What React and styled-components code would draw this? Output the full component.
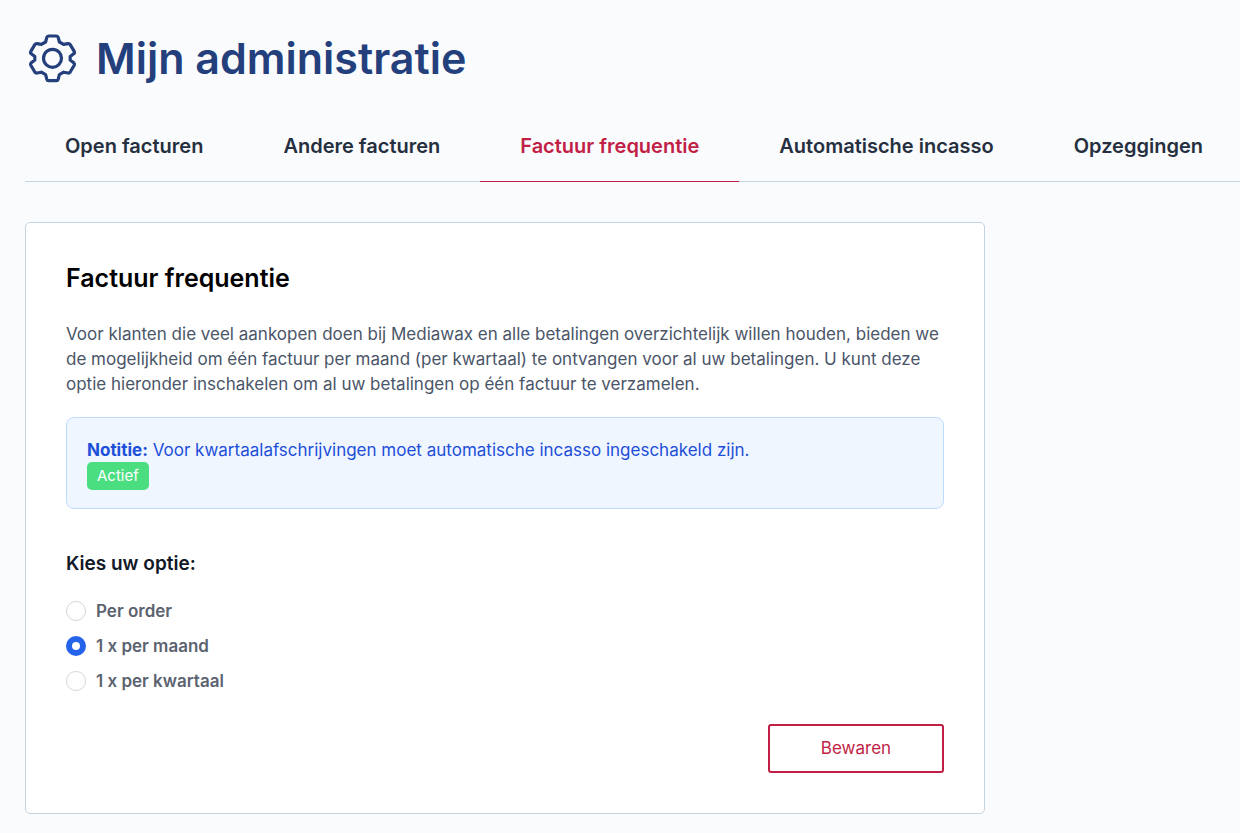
import React, { useState } from 'react'
import styled, { createGlobalStyle } from 'styled-components'

const GlobalStyle = createGlobalStyle`
*{
  box-sizing:border-box;
}
body{
  margin:0;
  background-color:#fafbfd;
  color:#4a5568;
  font-family:Inter, Roboto, sans-serif;
  font-size:17px;
  line-height:25px;
  overflow-x:hidden;
}
`

const Container = styled.main`
  padding:25px 0 20px 25px;
`

const Header = styled.header`
  display:flex;
  align-items:center;
  gap:16px;
  height:66px;
  color:#24407c;
`

const GearIcon = styled.svg`
  width:55px;
  height:54px;
  flex:none;
`

const Title = styled.h1`
  margin:0;
  font-size:43px;
  line-height:66px;
  font-weight:600;
`

const Tabs = styled.nav`
  display:flex;
  margin-top:20px;
  border-bottom:1px solid #c5d4e2;
`

const Tab = styled.a`
  padding:20px 40px;
  margin-bottom:-1px;
  border-bottom:1px solid ${(props) => (props.$active ? "#c11f46" : "transparent")};
  color:${(props) => (props.$active ? "#c11f46" : "#252f3f")};
  font-size:20px;
  line-height:30px;
  font-weight:600;
  text-decoration:none;
  white-space:nowrap;
`

const Card = styled.form`
  max-width:960px;
  margin-top:40px;
  padding:40px;
  background-color:#fff;
  border:1px solid #c5d4e2;
  border-radius:5px;
`

const CardTitle = styled.h2`
  margin:0;
  color:#000;
  font-size:25px;
  line-height:30px;
  font-weight:600;
`

const Descr = styled.p`
  margin:29px 0 20px;
`

const Notice = styled.div`
  padding:20px 20px 18px;
  background-color:#eff6ff;
  border:1px solid #bfdbfe;
  border-radius:8px;
  color:#1d4ed8;
`

const NoticeText = styled.p`
  margin:0;
  line-height:24px;
`

const Badge = styled.span`
  display:block;
  width:fit-content;
  padding:4px 10px;
  background-color:#4ade80;
  border-radius:5px;
  color:#fff;
  font-size:15px;
  line-height:20px;
`

const Options = styled.fieldset`
  display:flex;
  flex-direction:column;
  gap:11px;
  margin:40px 0 0;
  padding:0;
  border:0;
`

const OptionsTitle = styled.legend`
  padding:0;
  margin-bottom:20px;
  color:#111827;
  font-size:19px;
  line-height:30px;
  font-weight:600;
`

const Option = styled.label`
  display:flex;
  align-items:center;
  gap:10px;
  color:#5c6370;
  line-height:24px;
  font-weight:600;
`

const Radio = styled.input`
  appearance:none;
  width:20px;
  height:20px;
  margin:0;
  background-color:#fff;
  border:1px solid #d2d6dc;
  border-radius:50%;
  &:checked{
    background-color:#fff;
    border:6px solid #2563eb;
  }
`

const Actions = styled.div`
  display:flex;
  justify-content:flex-end;
  margin-top:31px;
`

const Button = styled.button`
  width:176px;
  padding:10px 20px;
  background-color:#fff;
  border:2px solid #c11f46;
  border-radius:3px;
  color:#c11f46;
  font-family:inherit;
  font-size:17px;
  line-height:25px;
  cursor:pointer;
`

const tabs = [
  "Open facturen",
  "Andere facturen",
  "Factuur frequentie",
  "Automatische incasso",
  "Opzeggingen",
]

const options = [
  { value: "order", label: "Per order" },
  { value: "maand", label: "1 x per maand" },
  { value: "kwartaal", label: "1 x per kwartaal" },
]

const App = () => {
  const [frequency, setFrequency] = useState("maand")

  return (
    <Container>
      <GlobalStyle />
      <Header>
        <GearIcon viewBox="0 0 55 54" fill="none" stroke="currentColor" strokeWidth="3.2" strokeLinejoin="round" aria-hidden="true">
          <path d="M23.6 5H31.4Q32.8 5 33.2 6.4L34.4 11L38.6 13.4L43 12.6Q44.4 12.4 45.2 13.6L49.2 20.4Q49.9 21.6 49 22.6L45.2 25.6V29L49 32Q49.9 33 49.2 34.2L45.2 41Q44.4 42.2 43 42L38.6 41.2L34.4 43.6L33.2 48.2Q32.8 49.6 31.4 49.6H23.6Q22.2 49.6 21.8 48.2L20.6 43.6L16.4 41.2L12 42Q10.6 42.2 9.8 41L5.8 34.2Q5.1 33 6 32L9.8 29V25.6L6 22.6Q5.1 21.6 5.8 20.4L9.8 13.6Q10.6 12.4 12 12.6L16.4 13.4L20.6 11L21.8 6.4Q22.2 5 23.6 5Z" />
          <circle cx="27.5" cy="27.3" r="9" />
        </GearIcon>
        <Title>Mijn administratie</Title>
      </Header>
      <Tabs>
        {tabs.map((tab) => (
          <Tab key={tab} href="#" $active={tab === "Factuur frequentie"}>{tab}</Tab>
        ))}
      </Tabs>
      <Card onSubmit={(e) => e.preventDefault()}>
        <CardTitle>Factuur frequentie</CardTitle>
        <Descr>
          Voor klanten die veel aankopen doen bij Mediawax en alle betalingen overzichtelijk willen houden, bieden we
          de mogelijkheid om één factuur per maand (per kwartaal) te ontvangen voor al uw betalingen. U kunt deze
          optie hieronder inschakelen om al uw betalingen op één factuur te verzamelen.
        </Descr>
        <Notice>
          <NoticeText>
            <b>Notitie:</b> Voor kwartaalafschrijvingen moet automatische incasso ingeschakeld zijn.
          </NoticeText>
          <Badge>Actief</Badge>
        </Notice>
        <Options>
          <OptionsTitle>Kies uw optie:</OptionsTitle>
          {options.map((option) => (
            <Option key={option.value}>
              <Radio
                type="radio"
                name="frequency"
                value={option.value}
                checked={frequency === option.value}
                onChange={() => setFrequency(option.value)}
              />
              {option.label}
            </Option>
          ))}
        </Options>
        <Actions>
          <Button type="submit">Bewaren</Button>
        </Actions>
      </Card>
    </Container>
  )
}

export default App
